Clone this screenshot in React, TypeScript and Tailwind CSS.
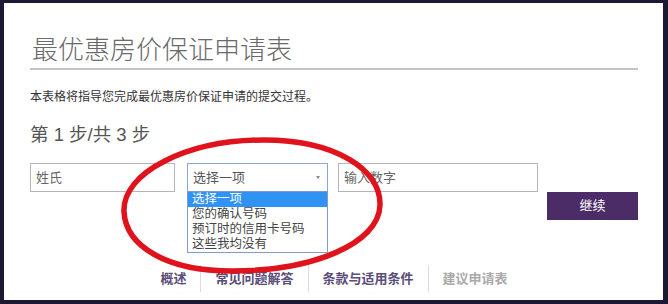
// 最优惠房价保证申请表 — 第 1 步，下拉菜单展开状态

const cjk = { fontFamily: '"Liberation Sans", "Noto Sans CJK SC", sans-serif' };

const options = ['选择一项', '您的确认号码', '预订时的信用卡号码', '这些我均没有'];

const navLinks = [
  { label: '概述', active: true },
  { label: '常见问题解答', active: true },
  { label: '条款与适用条件', active: true },
  { label: '建议申请表', active: false },
];

function Highlight() {
  // 截图上手画的红圈
  return (
    <svg className="pointer-events-none absolute inset-0" width="668" height="304" viewBox="0 0 668 304">
      <path
        d="M 124 212 C 122 172, 188 140, 264 140 C 336 140, 381 170, 380 205 C 379 244, 312 271, 232 271 C 166 271, 126 246, 124 212 Z"
        fill="none"
        stroke="#e0121c"
        strokeWidth="5.5"
      />
    </svg>
  );
}

export default function App() {
  return (
    <div className="relative h-[304px] w-[668px] bg-[#1d1833] pt-[3px] pr-[5px] pb-[4px] pl-[4px]" style={cjk}>
      <div className="h-full bg-white pt-[31px] pr-[25px] pl-[26px]">
        <h1 className="border-b-2 border-[#c4c4c4] pb-[2px] pl-[2px] text-[26px] leading-[32px] font-light text-[#6a6a6a]">
          最优惠房价保证申请表
        </h1>
        <p className="mt-[19px] text-[12px] leading-[16px] text-[#333]">
          本表格将指导您完成最优惠房价保证申请的提交过程。
        </p>
        <h2 className="mt-[17px] text-[18.5px] leading-[25px] text-[#555]">
          第 1 步/共 3 步
        </h2>

        <div className="mt-[16px] flex items-start">
          <div className="flex h-[29px] w-[145px] items-center border border-[#b5b5b5] px-[5px] text-[13px] text-[#666]">
            姓氏
          </div>
          <div className="relative ml-[12px] w-[141px]">
            <div className="flex h-[29px] items-center justify-between border border-[#8aa6d6] pr-[7px] pl-[5px] text-[13px] text-[#555]">
              <span>选择一项</span>
              <svg width="4" height="3" viewBox="0 0 4 3">
                <path d="M0 0 L4 0 L2 3 Z" fill="#888" />
              </svg>
            </div>
            <ul className="absolute top-[28px] left-0 z-10 w-full border border-[#7f9bc9] bg-white text-[12.5px] leading-[15px] text-[#444]">
              {options.map((opt, i) => (
                <li
                  key={opt}
                  className={i === 0 ? 'bg-[#3092f2] pl-[4px] text-white' : 'pl-[4px]'}
                >
                  {opt}
                </li>
              ))}
            </ul>
          </div>
          <div className="ml-[10px] flex h-[29px] w-[200px] items-center border border-[#b5b5b5] px-[5px] text-[13px] text-[#666]">
            输入数字
          </div>
        </div>

        <div className="flex justify-end">
          <button className="h-[28px] w-[91px] bg-[#4b2c67] text-[13px] text-white">继续</button>
        </div>

        <nav className="mt-[45px] flex justify-center">
          {navLinks.map((link, i) => (
            <span
              key={link.label}
              className={
                'px-[14px] py-[6px] text-[13px] leading-[15px] font-bold ' +
                (i > 0 ? 'border-l border-[#dcdcdc] ' : '') +
                (link.active ? 'text-[#5a4d78]' : 'text-[#aaa]')
              }
            >
              {link.label}
            </span>
          ))}
        </nav>
      </div>
      <Highlight />
    </div>
  );
}
